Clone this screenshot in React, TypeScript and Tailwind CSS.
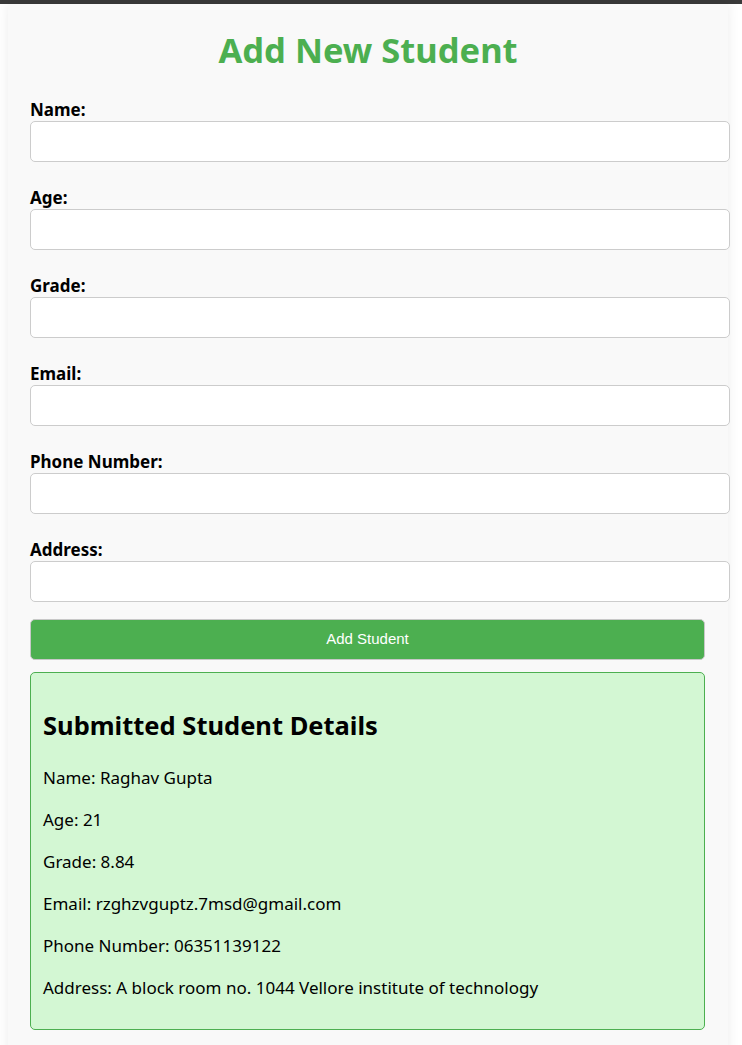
import React from "react";

const fields = ["Name", "Age", "Grade", "Email", "Phone Number", "Address"];

const details = [
  "Name: Raghav Gupta",
  "Age: 21",
  "Grade: 8.84",
  "Email: rzghzvguptz.7msd@gmail.com",
  "Phone Number: 06351139122",
  "Address: A block room no. 1044 Vellore institute of technology",
];

export default function App() {
  return (
    <div className="min-h-[1045px] bg-white" style={{ fontFamily: '"Noto Sans", "Open Sans", sans-serif' }}>
      <div className="h-[4px] bg-[#3a3a3a]" />
      <div className="ml-[8px] w-[720px] bg-[#f9f9f9] p-[22px] pb-[40px] shadow-[0_0_12px_rgba(0,0,0,0.08)]">
        <h1 className="m-0 mb-[24px] text-center text-[34.5px] font-bold leading-[48px] text-[#4caf50]">
          Add New Student
        </h1>
        <form onSubmit={(e) => e.preventDefault()}>
          {fields.map((f, i) => (
            <div key={f} className={i === fields.length - 1 ? "mb-[17px]" : "mb-[24px]"}>
              <label className="block text-[17px] font-bold leading-[23px] text-black">{f}:</label>
              <input
                type="text"
                className="block h-[41px] w-[700px] rounded-[5px] border border-[#cccccc] bg-white px-[11px] text-[16px] outline-none"
              />
            </div>
          ))}
          <button
            type="submit"
            className="block h-[41px] w-[675px] rounded-[5px] border border-[#c8c8c8] bg-[#4caf50] text-[15px] text-white"
            style={{ fontFamily: '"Liberation Sans", Arial, sans-serif' }}
          >
            Add Student
          </button>
        </form>
        <div className="mt-[12px] w-[675px] rounded-[5px] border border-[#4caf50] bg-[#d3f7d3] px-[12px] py-[11px] text-black">
          <h2 className="mt-[22px] mb-[22px] text-[25.5px] font-bold leading-[38px]">Submitted Student Details</h2>
          {details.map((d) => (
            <p key={d} className="my-[18px] text-[17px] leading-[24px]">
              {d}
            </p>
          ))}
        </div>
      </div>
    </div>
  );
}
